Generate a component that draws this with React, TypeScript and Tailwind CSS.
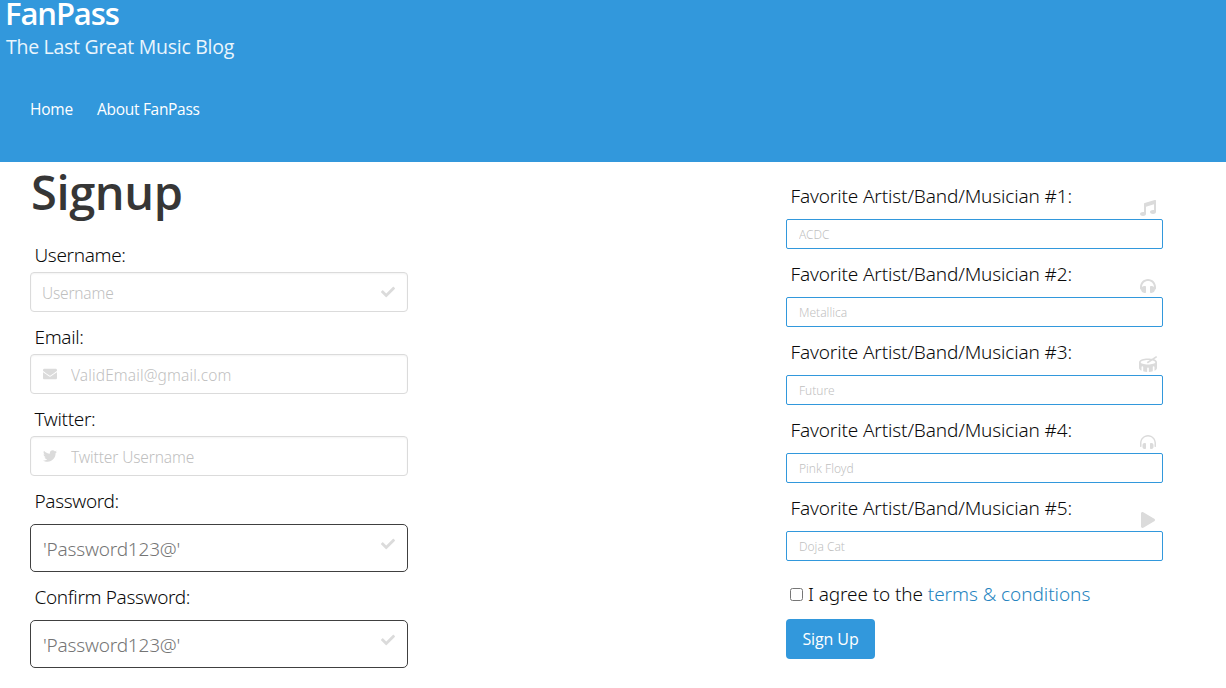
import React from 'react';
import type { IconType } from 'react-icons';
import { FaCheck, FaDrum, FaEnvelope, FaHeadphones, FaHeadphonesAlt, FaMusic, FaPlay, FaTwitter } from 'react-icons/fa';

const light = "font-['Noto_Sans',sans-serif] font-light";

const artists: { name: string; icon: IconType; iconClass: string }[] = [
  { name: 'ACDC', icon: FaMusic, iconClass: 'size-4' },
  { name: 'Metallica', icon: FaHeadphones, iconClass: 'size-4' },
  { name: 'Future', icon: FaDrum, iconClass: 'size-[18px] -mb-px' },
  { name: 'Pink Floyd', icon: FaHeadphonesAlt, iconClass: 'size-4' },
  { name: 'Doja Cat', icon: FaPlay, iconClass: 'size-4' },
];

function Label({ text }: { text: string }) {
  return <label className={`${light} block pl-[4.5px] text-[19px] leading-[33px] tracking-[-0.35px] text-[#0a0a0a]`}>{text}</label>;
}

function TextField({ label, placeholder, tracking, left, right }: {
  label: string; placeholder: string; tracking: string; left?: React.ReactNode; right?: React.ReactNode;
}) {
  return (
    <div className="mb-[9px]">
      <Label text={label} />
      <div className="flex h-10 items-center rounded border border-[#dbdbdb] bg-white pr-3 pl-[11px] text-sm text-[#dbdbdb] shadow-[inset_0_1px_2px_rgba(10,10,10,0.05)]">
        {left && <span className="mr-[14px] ml-px">{left}</span>}
        <input
          placeholder={placeholder}
          className={`${light} ${tracking} h-full min-w-0 flex-1 bg-transparent pt-[2px] text-[15.5px] outline-none placeholder:text-[#bfbfbf]`}
        />
        {right}
      </div>
    </div>
  );
}

function PasswordField({ label }: { label: string }) {
  return (
    <div>
      <Label text={label} />
      <div className="mt-[6px] mb-[9px] flex h-12 rounded-[5px] border border-[#404040] bg-white px-3 text-sm text-[#dbdbdb]">
        <input
          placeholder="'Password123@'"
          className={`${light} h-full min-w-0 flex-1 bg-transparent pt-[2px] text-[19px] tracking-[-0.2px] outline-none placeholder:text-[#757575]`}
        />
        <FaCheck className="mt-3" />
      </div>
    </div>
  );
}

export default function App() {
  return (
    <div className="h-[688px] overflow-hidden bg-white font-['Open_Sans',sans-serif]">
      <header className="h-[162px] bg-[#3298dc] text-white">
        <h1 className="h-[27px] pl-[5px] text-[31px] leading-[26px] font-semibold tracking-[-1.1px]">FanPass</h1>
        <p className="pl-[6px] text-[19.5px] leading-[40px] tracking-[-0.28px] text-[#eaf5fc]">The Last Great Music Blog</p>
        <nav className="flex gap-6 pt-[30px] pl-[30px] text-[15.5px] leading-6">
          <a className="tracking-[-0.2px]">Home</a>
          <a className="tracking-[-0.3px]">About FanPass</a>
        </nav>
      </header>
      <main className="flex justify-between pr-[63px] pl-[30px]">
        <section className="w-[378px]">
          <h2 className="h-[77px] pl-px text-[47px] leading-[60px] font-semibold tracking-[-0.4px] text-[#363636]">Signup</h2>
          <TextField label="Username:" placeholder="Username" tracking="tracking-[-0.2px]" right={<FaCheck />} />
          <TextField label="Email:" placeholder="ValidEmail@gmail.com" tracking="tracking-[0.12px]" left={<FaEnvelope />} />
          <TextField label="Twitter:" placeholder="Twitter Username" tracking="tracking-[-0.13px]" left={<FaTwitter />} />
          <PasswordField label="Password:" />
          <PasswordField label="Confirm Password:" />
        </section>
        <section className={`${light} w-[377px] pt-[18px]`}>
          {artists.map(({ name, icon: Icon, iconClass }, i) => (
            <div key={name} className="h-[78px]">
              <div className="flex h-[39px] items-end justify-between pr-[6px] pl-[4.5px]">
                <label className="h-[39px] text-[19px] leading-[33px] tracking-[-0.14px] text-[#0a0a0a]">
                  Favorite Artist/Band/Musician #{i + 1}:
                </label>
                <span className="mb-[3px] flex w-[18px] justify-center text-[#dbdbdb]">
                  <Icon className={`${iconClass} shrink-0`} />
                </span>
              </div>
              <input
                placeholder={name}
                className="block h-[30px] w-full rounded-xs border border-[#3298dc] bg-white pl-3 text-xs outline-none placeholder:text-[#bfbfbf]"
              />
            </div>
          ))}
          <div className="flex h-[49px] items-start pt-[8px] pl-1 text-[19px] leading-[33px]">
            <input type="checkbox" className="mt-[10px] mr-[5px] size-[13px]" />
            <span className="tracking-[-0.1px] text-[#0a0a0a]">I agree to the&nbsp;</span>
            <a className="tracking-[-0.06px] text-[#2584c0]">terms &amp; conditions</a>
          </div>
          <button className="h-10 w-[89px] rounded bg-[#3298dc] font-['Open_Sans',sans-serif] text-base font-normal tracking-[-0.1px] text-white">Sign Up</button>
        </section>
      </main>
    </div>
  );
}
